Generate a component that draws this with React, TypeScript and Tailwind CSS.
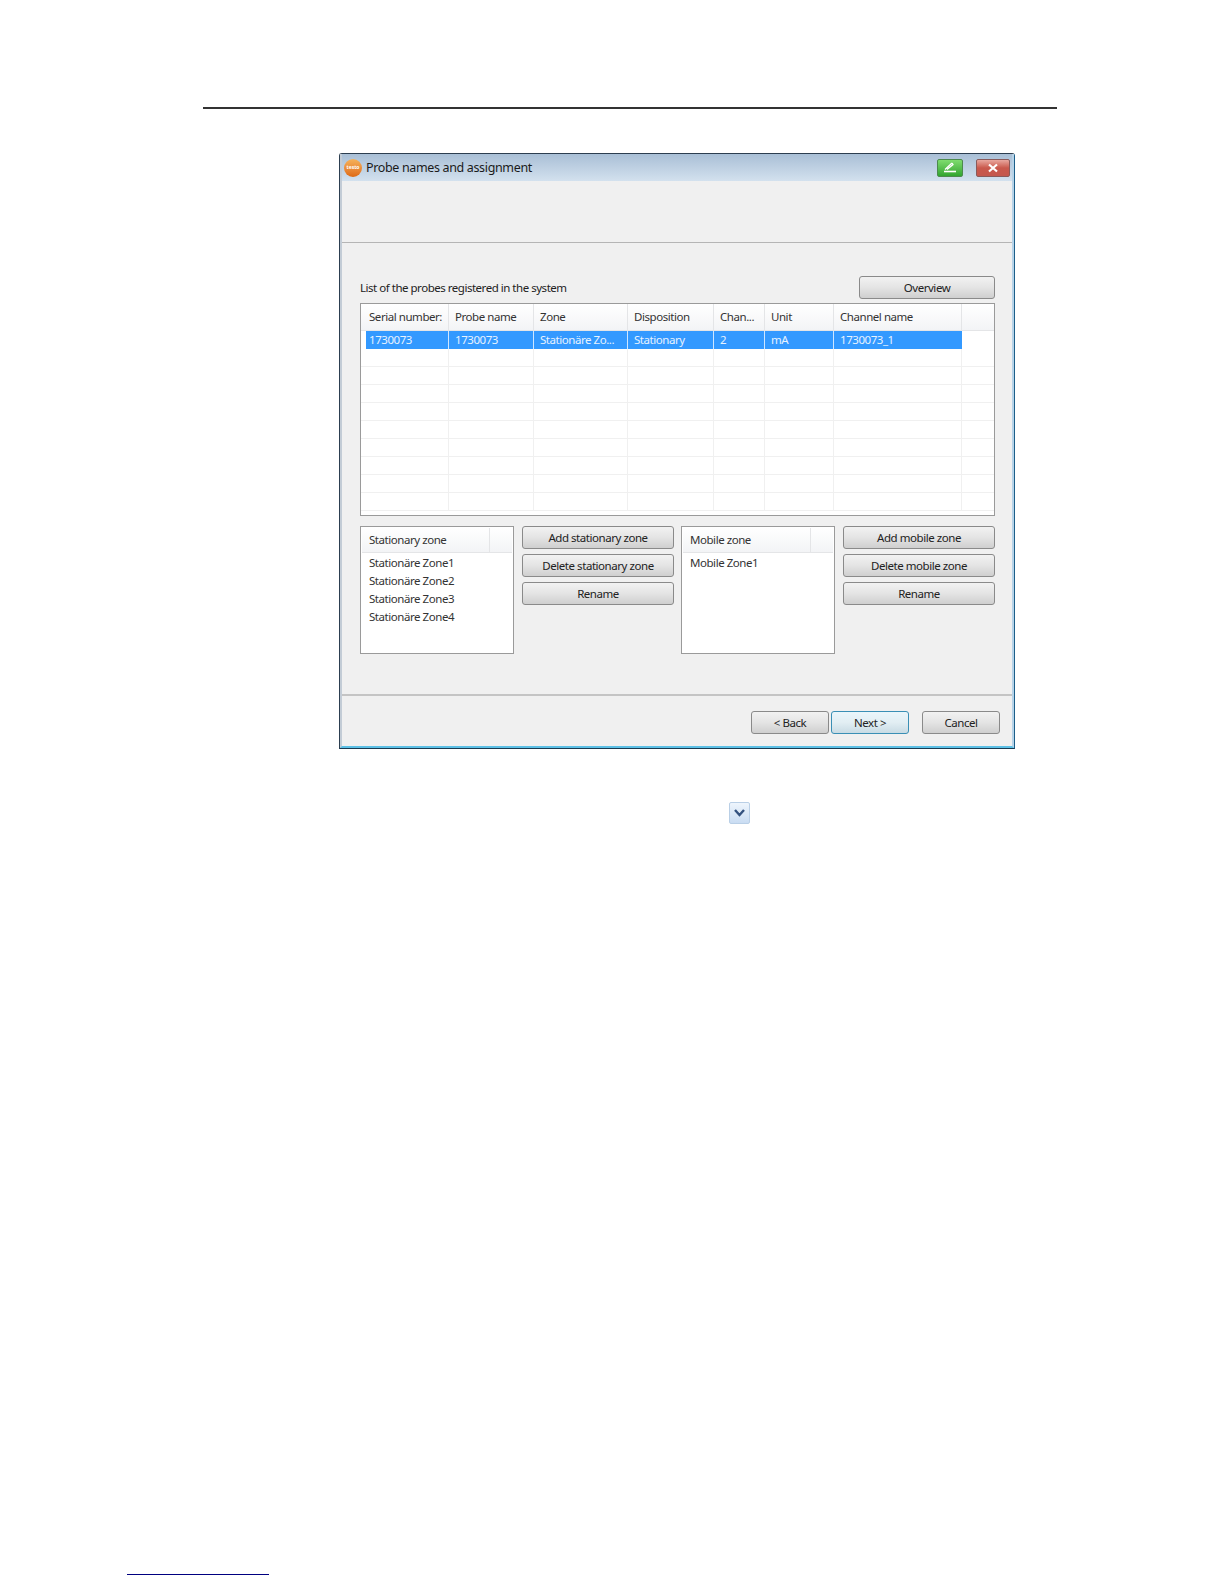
import { ReactNode } from 'react';

const COLUMNS: { label: string; value: string; width: string }[] = [
  { label: 'Serial number:', value: '1730073', width: 'w-[87px]' },
  { label: 'Probe name', value: '1730073', width: 'w-[85px]' },
  { label: 'Zone', value: 'Stationäre Zo...', width: 'w-[94px]' },
  { label: 'Disposition', value: 'Stationary', width: 'w-[86px]' },
  { label: 'Chan...', value: '2', width: 'w-[51px]' },
  { label: 'Unit', value: 'mA', width: 'w-[69px]' },
  { label: 'Channel name', value: '1730073_1', width: 'w-[128px]' },
];

const EMPTY_ROWS = [0, 1, 2, 3, 4, 5, 6, 7, 8];

function WinButton({
  children,
  className = 'w-[152px]',
  focused = false,
}: {
  children: ReactNode;
  className?: string;
  focused?: boolean;
}) {
  return (
    <div
      className={`h-[23px] shrink-0 pt-[1px] rounded-[3px] border flex items-center justify-center text-[#222] tracking-[-0.45px] bg-gradient-to-b ${
        focused
          ? 'border-[#3a8fb5] from-[#eaf6fb] via-[#e2eef3] to-[#c8dbe4]'
          : 'border-[#8a8a8a] from-[#f2f2f2] via-[#e4e4e4] to-[#cfcfcf]'
      } ${className}`}
    >
      {children}
    </div>
  );
}

function ZoneList({ title, items }: { title: string; items: string[] }) {
  return (
    <div className="w-[154px] h-[128px] shrink-0 border border-[#9a9a9a] bg-white p-[1px]">
      <div className="h-[25px] flex border-b border-[#e4e5e7] bg-gradient-to-b from-white to-[#f3f4f6] text-[#333]">
        <div className="w-[128px] border-r border-[#e4e5e7] pl-[7px] pt-[6px] tracking-[-0.45px]">{title}</div>
      </div>
      <div className="pl-[7px] pt-[1px] text-[#333] tracking-[-0.45px]">
        {items.map((item) => (
          <div key={item} className="h-[18px] leading-[18px]">
            {item}
          </div>
        ))}
      </div>
    </div>
  );
}

export default function App() {
  return (
    <div className="w-[1224px] h-[1584px] bg-white overflow-hidden flex flex-col text-[11.5px] leading-none font-['Noto_Sans',sans-serif]">
      <div className="mt-[107px] ml-[203px] w-[854px] h-[2px] bg-[#333]" />

      {/* Dialog */}
      <div className="mt-[44px] ml-[339px] w-[676px] h-[596px] rounded-t-[3px] border border-[#2c3e50] border-r-[#1c5f8a] border-b-[#1a3a50] bg-[#f0f0f0] flex flex-col">
        <div className="flex-1 flex flex-col border-x-2 border-l-[#c3ccd6] border-r-[#b7d3e8] border-b-2 border-b-[#5cc0e6]">
          {/* Title bar */}
          <div className="h-[27px] shrink-0 flex items-center bg-gradient-to-b from-[#a9bfd6] to-[#d3e1ee] pl-[2px]">
            <div className="w-[18px] h-[18px] rounded-full bg-gradient-to-b from-[#f5b25a] to-[#de6a12] flex items-center justify-center text-white text-[5px] font-bold">
              testo
            </div>
            <span className="ml-[4px] pt-[2px] text-[12.5px] text-[#1a1a1a] tracking-[-0.35px]">Probe names and assignment</span>
            <div className="ml-auto mr-[2px] flex items-center gap-[13px]">
              <div className="w-[26px] h-[18px] rounded-[2px] border border-[#4d8a4d] bg-gradient-to-b from-[#7fdc6f] to-[#2fa52f] flex items-center justify-center">
                <svg width="16" height="13" viewBox="0 0 16 13" fill="none" stroke="#fff" strokeWidth="1.3">
                  <path d="M3 8.5 L10 2 M10 2 L11 3.5 L5 8.5" />
                  <path d="M2 10.5 H14" strokeWidth="1.6" />
                </svg>
              </div>
              <div className="w-[34px] h-[18px] rounded-[2px] border border-[#8a5a5a] bg-gradient-to-b from-[#e8a79f] via-[#c9584c] to-[#c4584e] flex items-center justify-center">
                <svg width="12" height="10" viewBox="0 0 12 10" fill="none" stroke="#fff" strokeWidth="2.2">
                  <path d="M2 1.5 L10 8.5 M10 1.5 L2 8.5" />
                </svg>
              </div>
            </div>
          </div>

          <div className="h-[62px] shrink-0 border-b border-[#b5b5b5]" />

          {/* Body */}
          <div className="flex-1 pl-[18px] pr-[17px] flex flex-col">
            <div className="mt-[32px] h-[24px] flex items-end justify-between">
              <span className="pb-[6px] text-[#222] tracking-[-0.48px]">List of the probes registered in the system</span>
              <WinButton className="w-[136px]">Overview</WinButton>
            </div>

            {/* Probe table */}
            <div className="mt-[4px] w-[635px] h-[213px] border border-[#9a9a9a] bg-white overflow-hidden">
              <div className="h-[27px] pl-[1px] flex bg-gradient-to-b from-white to-[#f3f4f6] border-b border-[#e4e5e7] text-[#333]">
                {COLUMNS.map((col, i) => (
                  <div
                    key={col.label}
                    className={`${col.width} ${i === 0 ? 'pl-[7px]' : 'pl-[6px]'} border-r border-[#e4e5e7] pt-[7px] tracking-[-0.45px]`}
                  >
                    {col.label}
                  </div>
                ))}
              </div>
              <div className="h-[18px] pl-[5px] flex">
                <div className="flex bg-[#3399ff] text-[#e6f2ff]">
                  {COLUMNS.map((col, i) => (
                    <div
                      key={col.label}
                      className={`${i === 0 ? 'w-[83px] pl-[3px]' : `${col.width} pl-[6px]`} border-r border-[#cfe6ff] last:border-r-0 pt-[3px] tracking-[-0.45px]`}
                    >
                      {col.value}
                    </div>
                  ))}
                </div>
              </div>
              {EMPTY_ROWS.map((row) => (
                <div key={row} className="h-[18px] pl-[1px] flex border-b border-[#f0f0f0]">
                  {COLUMNS.map((col) => (
                    <div key={col.label} className={`${col.width} border-r border-[#f0f0f0]`} />
                  ))}
                </div>
              ))}
            </div>

            {/* Zones */}
            <div className="mt-[10px] flex">
              <ZoneList title="Stationary zone" items={['Stationäre Zone1', 'Stationäre Zone2', 'Stationäre Zone3', 'Stationäre Zone4']} />
              <div className="ml-[8px] flex flex-col gap-[5px]">
                <WinButton>Add stationary zone</WinButton>
                <WinButton>Delete stationary zone</WinButton>
                <WinButton>Rename</WinButton>
              </div>
              <div className="ml-[7px]">
                <ZoneList title="Mobile zone" items={['Mobile Zone1']} />
              </div>
              <div className="ml-[8px] flex flex-col gap-[5px]">
                <WinButton>Add mobile zone</WinButton>
                <WinButton>Delete mobile zone</WinButton>
                <WinButton>Rename</WinButton>
              </div>
            </div>
          </div>

          {/* Footer */}
          <div className="h-[52px] shrink-0 border-t-2 border-[#c4c4c4] flex items-start justify-end pt-[15px] pr-[12px]">
            <WinButton className="w-[78px]">&lt; Back</WinButton>
            <WinButton className="w-[78px] ml-[2px]" focused>
              Next &gt;
            </WinButton>
            <WinButton className="w-[78px] ml-[13px]">Cancel</WinButton>
          </div>
        </div>
      </div>

      {/* Collapse chevron */}
      <div className="mt-[53px] ml-[729px] w-[21px] h-[22px] rounded-[2px] border border-[#b9cfe6] bg-gradient-to-b from-[#eef5fc] to-[#c9dcf2] flex items-center justify-center">
        <svg width="13" height="10" viewBox="0 0 13 10" fill="none" stroke="#34527f" strokeWidth="2.4">
          <path d="M2 2 L6.5 7 L11 2" />
        </svg>
      </div>

      <div className="mt-[750px] ml-[127px] w-[142px] h-[1px] bg-[#000080]" />
    </div>
  );
}
